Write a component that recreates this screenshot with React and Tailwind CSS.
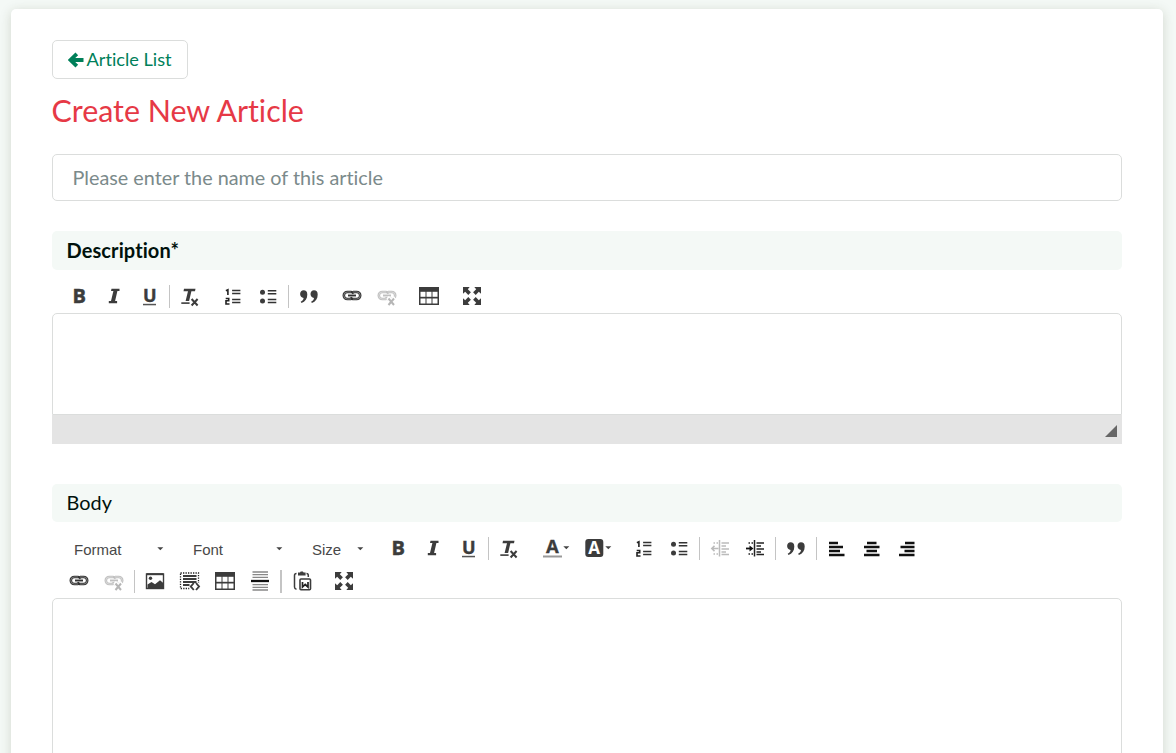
const K = '#3c3c3c';
const SANS = "'Open Sans', sans-serif";

const Svg = ({ children, dim }) => (
  <svg width="20" height="20" viewBox="0 0 20 20" className={dim ? 'shrink-0 overflow-visible opacity-30' : 'shrink-0 overflow-visible'}>{children}</svg>
);

const Bold = () => <Svg><text x="3.4" y="17.2" fontFamily={SANS} fontWeight="700" fontSize="20" fill={K} stroke={K} strokeWidth=".5">B</text></Svg>;
const Italic = () => (
  <Svg><path d="M7.500 2.800h8v2.200h-2.100l-2.300 10h2V17.200H4.800V15h2.200l2.400-10H7z" fill={K} /></Svg>
);
const Underline = () => (
  <Svg>
    <text x="4" y="15.800" fontFamily={SANS} fontWeight="700" fontSize="18" fill={K} stroke={K} strokeWidth=".4">U</text>
    <rect x="4" y="17.800" width="13" height="1.500" fill="#555" />
  </Svg>
);
const RemoveFormat = () => (
  <Svg>
    <path d="M5 2.800h11.500l-.5 2.500h-3.600L10.100 15H6.600L9 5.300H4.500z" fill={K} />
    <rect x="2.300" y="16.300" width="8.300" height="1.600" fill={K} />
    <path d="M12.600 13l6 6.500m0-6.500l-6 6.500" stroke={K} strokeWidth="2" />
  </Svg>
);
const NumList = () => (
  <Svg>
    <g transform="translate(1.9 0)">
      <path d="M2 4.800l2-1V9M1.800 12.500h3v2.300h-2.700v3.200h3.500" fill="none" stroke="#222" strokeWidth="1.600" />
      <path d="M8.200 4.500h8.300M8.200 7.500h8.300M8.200 13.500h8.300M8.200 16.500h8.300" stroke="#333" strokeWidth="1.400" />
    </g>
  </Svg>
);
const BulletList = () => (
  <Svg>
    <circle cx="5.500" cy="6.200" r="2.500" fill={K} />
    <circle cx="5.500" cy="15" r="2.500" fill={K} />
    <path d="M10.800 4.700h8.500M10.800 7.700h8.500M10.800 13.500h8.500M10.800 16.500h8.500" stroke="#333" strokeWidth="1.500" />
  </Svg>
);
const Quote = () => (
  <Svg>
    {[1.100, 11.500].map((x) => (
      <path key={x} transform={`translate(${x} .5)`} d="M4.500 3.800c2.300 0 3.700 1.500 3.700 4.100 0 4.200-2 7.200-5.800 8.600l-.8-1.200c1.800-1 2.700-2.300 2.900-3.900C2.500 11.400 1 10 1 7.600c0-2.300 1.500-3.800 3.500-3.800z" fill={K} />
    ))}
  </Svg>
);
const chain = (
  <g fill="none">
    <g stroke="#333" strokeWidth="2.600">
      <path d="M9 13H5.300a3.500 3.500 0 010-7H9c1.200 0 2.200.6 2.700 1.500" />
      <path d="M11 6h3.700a3.500 3.500 0 010 7H11c-1.200 0-2.200-.6-2.700-1.500" />
    </g>
    <g stroke="#999" strokeWidth=".7">
      <path d="M9 13H5.300a3.500 3.500 0 010-7H9" />
      <path d="M11 6h3.700a3.500 3.500 0 010 7H11" />
    </g>
    <path d="M6 9.500h8" stroke="#333" strokeWidth="1.900" />
  </g>
);
const Link = () => <Svg>{chain}</Svg>;
const Unlink = () => (
  <Svg dim>
    {chain}
    <path d="M10.500 11.500l7.500 7m0-7l-7.500 7" stroke="#fff" strokeWidth="4" />
    <path d="M11.500 12.500l5.500 6.500m0-6.500l-5.500 6.500" stroke="#111" strokeWidth="2" />
  </Svg>
);
const Table = () => (
  <Svg>
    <rect y="1" width="20" height="18" fill={K} />
    <g fill="#fff">
      {[5.800, 12.500].map((y) => [1.500, 7.500, 13.500].map((x) => <rect key={x + '-' + y} x={x} y={y} width="5" height="5" />))}
    </g>
  </Svg>
);
const Maximize = () => (
  <Svg>
    {[0, 90, 180, 270].map((r) => (
      <path key={r} transform={`rotate(${r} 10 10)`} d="M1 1h6.700L5.800 3.200l3.100 3.100-2.600 2.600-3.100-3.100L1 7.700z" fill={K} />
    ))}
  </Svg>
);
const Caret = () => <svg width="7" height="4" viewBox="0 0 7 4" className="shrink-0"><path d="M.3.3h6l-3 3z" fill="#444" /></svg>;
const TextColor = () => (
  <Svg>
    <text x="3" y="15" fontFamily={SANS} fontWeight="700" fontSize="18.5" fill={K} stroke={K} strokeWidth=".3">A</text>
    <rect x="0" y="17.500" width="19" height="2" fill="#999" />
  </Svg>
);
const BgColor = () => (
  <Svg>
    <rect x=".3" y="1" width="18" height="18" rx="3" fill={K} />
    <text x="3.200" y="15.800" fontFamily={SANS} fontWeight="700" fontSize="17" fill="#fff">A</text>
  </Svg>
);
const indentLines = (
  <>
    <path d="M10 1.500v16.500" stroke="#222" strokeWidth="1.500" />
    <path d="M12 4.500h7.500M12 7.500h4.500M12 10.500h7.500M12 13.500h4.500M12 16h7.500" stroke="#222" strokeWidth="1.300" />
    <path d="M4 4.500h1.500M7 4.500h1.500M4 15.500h1.500M7 15.500h1.500" stroke="#222" strokeWidth="1.300" />
  </>
);
const Outdent = () => <Svg dim><g transform="translate(.5 .5)">{indentLines}<path d="M9 10H2m3-2.600L2.300 10 5 12.600" fill="none" stroke="#222" strokeWidth="1.500" /></g></Svg>;
const Indent = () => <Svg><g transform="translate(.5 .5)">{indentLines}<path d="M1.500 10H6" stroke="#111" strokeWidth="1.800" /><path d="M5 7l4 3-4 3z" fill="#111" /></g></Svg>;
const AlignLeft = () => <Svg><path d="M3 5h9M3 9h14M3 13h11M3 17h15.500" stroke="#111" strokeWidth="2.300" /></Svg>;
const AlignCenter = () => <Svg><path d="M6 5h9.500M3 9h15.500M5.500 13h10.500M3 17h15.500" stroke="#111" strokeWidth="2.300" /></Svg>;
const AlignRight = () => <Svg><path d="M9 5h9.500M4.500 9h14M8.500 13h10M3 17h15.500" stroke="#111" strokeWidth="2.300" /></Svg>;
const Image = () => (
  <Svg>
    <rect x="2.500" y="3" width="17" height="14.500" fill="#fff" stroke={K} strokeWidth="1.400" />
    <path d="M2.500 3.200h17" stroke={K} strokeWidth="2" />
    <circle cx="6.500" cy="7.200" r="1.700" fill={K} />
    <path d="M3.500 17v-3.500l4-2.500 3.500 2.300 5-4 3 2.500V17z" fill={K} />
  </Svg>
);
const DivContainer = () => (
  <Svg>
    <rect x="1.500" y="2" width="18" height="15.500" fill="none" stroke="#222" strokeWidth="1.300" strokeDasharray="1.300 1.200" />
    <path d="M4 5h13.500M4 8h13.500M4 11h13.500M4 14h7" stroke={K} strokeWidth="1.900" />
    <path d="M10.500 12h10v8h-10z" fill="#fff" />
    <path d="M14.800 12l-3 3.500 3 3.500M17 12l3 3.500-3 3.500" fill="none" stroke={K} strokeWidth="1.900" />
  </Svg>
);
const PageBreak = () => (
  <Svg>
    <path d="M3.500 1h15.500M3.500 3.700h15.500M3.500 6.300h15.500M3.500 13.700h15.500M3.500 16.300h15.500M3.500 19h15.500" stroke="#888" strokeWidth="1.300" />
    <path d="M2 10H20" stroke="#111" strokeWidth="2.300" />
  </Svg>
);
const Paste = () => (
  <Svg>
    <path d="M4.500 2.500C3 2.500 2.500 3.300 2.500 4.500V16c0 1.300.7 2 2 2.200M14.500 2.500c1.300 0 1.800.8 1.800 2V6" fill="none" stroke={K} strokeWidth="1.500" />
    <path d="M6 1.500h2L8.700.5h2.200l.7 1h2V4.500H6z" fill={K} />
    <rect x="8" y="8" width="10.500" height="10.800" rx="1" fill="#fff" stroke={K} strokeWidth="1.600" />
    <path d="M10.500 11v5l2.700-2.500L16 16v-5" fill="none" stroke="#222" strokeWidth="1.700" />
  </Svg>
);

const Btn = ({ icon: Icon, className = '' }) => (
  <button className={`-mt-0.5 flex h-8 w-[35px] shrink-0 items-center pl-[7px] ${className}`}><Icon /></button>
);
const ColorBtn = ({ icon: Icon, className = '' }) => (
  <button className={`-mt-0.5 flex h-8 w-[42px] shrink-0 items-center pl-[7px] ${className}`}><Icon /><Caret /></button>
);
const Sep = ({ className = 'ml-0.5 mr-0.5 w-px' }) => <span className={`h-[23px] shrink-0 bg-[#c4c4c4] ${className}`} />;
const Combo = ({ label, className }) => (
  <button className={`flex h-8 shrink-0 items-center justify-between text-[15px] text-[#484848] ${className}`} style={{ fontFamily: "'Liberation Sans', Arial, sans-serif" }}>
    <span className="pt-[3px]">{label}</span><Caret />
  </button>
);

export default function App() {
  return (
    <div className="h-[753px] overflow-hidden bg-[#f4f9f6] pl-[11px] pr-[13px] pt-[9px] text-[#00120c] [font-variant-ligatures:none]" style={{ fontFamily: 'Lato, sans-serif' }}>
      <main className="flex h-[860px] flex-col items-stretch rounded-[5px] bg-white px-[41px] pt-[31px] shadow-[0_2px_12px_rgba(60,60,30,0.18)]">
        <button className="flex h-[39px] w-[136px] shrink-0 items-center rounded-[5px] border border-[#dbdddc] pl-[14.500px] text-[18.200px] text-[#00805a]">
          <svg width="16" height="16" viewBox="0 0 16 16" className="mr-[3px] mt-px shrink-0">
            <path d="M8.800 1.800L2.500 8l6.300 6.200M3 8h12.500" fill="none" stroke="#00805a" strokeWidth="3.800" />
          </svg>
          <span className="whitespace-nowrap">Article List</span>
        </button>
        <h1 className="-ml-[0.500px] mt-[12px] h-[39px] shrink-0 text-[30.400px] leading-[38px] text-[#e63946]">Create New Article</h1>
        <input placeholder="Please enter the name of this article" className="mt-[24px] h-[47px] shrink-0 rounded-[5px] border border-[#dbdddc] px-[19.500px] pb-0.5 text-[19.800px] outline-none placeholder:text-[#7b8a8b] placeholder:opacity-100" />
        <h2 className="mt-[30px] h-[39px] shrink-0 rounded-[5px] bg-[#f4f9f6] pl-[14.500px] text-[20px] font-bold leading-[39px] tracking-[0.005em]">Description*</h2>
        <div className="mt-[10px] flex h-[33px] shrink-0 items-center pl-[10px]">
          <Btn icon={Bold} /><Btn icon={Italic} /><Btn icon={Underline} />
          <Sep />
          <Btn icon={RemoveFormat} /><Btn icon={NumList} className="ml-2" /><Btn icon={BulletList} />
          <Sep className="ml-[3px] mr-0.5 w-px" />
          <Btn icon={Quote} /><Btn icon={Link} className="ml-[9px]" /><Btn icon={Unlink} />
          <Btn icon={Table} className="ml-[7px]" /><Btn icon={Maximize} className="ml-2" />
        </div>
        <div className="h-[102px] shrink-0 rounded-t-[5px] border border-[#dbdddc]" />
        <div className="flex h-[29px] shrink-0 items-end justify-end bg-[#e4e4e4] pb-[7px] pr-[5px]">
          <svg width="12" height="12" viewBox="0 0 12 12"><path d="M12 0v12H0z" fill="#666" /></svg>
        </div>
        <h2 className="mt-[40px] h-[38px] shrink-0 rounded-[5px] bg-[#f4f9f6] pl-[14.500px] text-[19.900px] leading-[36px]">Body</h2>
        <div className="mt-[10px] flex h-[33px] shrink-0 items-center pl-[22px]">
          <Combo label="Format" className="w-[90px]" />
          <Combo label="Font" className="ml-[29px] w-[90px]" />
          <Combo label="Size" className="ml-[29px] w-[52px]" />
          <Btn icon={Bold} className="ml-[17px]" /><Btn icon={Italic} /><Btn icon={Underline} />
          <Sep />
          <Btn icon={RemoveFormat} />
          <ColorBtn icon={TextColor} className="ml-[10px]" /><ColorBtn icon={BgColor} />
          <Btn icon={NumList} className="ml-1.5" /><Btn icon={BulletList} />
          <Sep className="ml-[3px] mr-0.5 w-px" />
          <Btn icon={Outdent} /><Btn icon={Indent} />
          <Sep className="ml-[3px] mr-0.5 w-px" />
          <Btn icon={Quote} />
          <Sep className="ml-[3px] mr-0.5 w-px" />
          <Btn icon={AlignLeft} /><Btn icon={AlignCenter} /><Btn icon={AlignRight} />
        </div>
        <div className="flex h-[33px] shrink-0 items-center pl-[10px]">
          <Btn icon={Link} /><Btn icon={Unlink} />
          <Sep />
          <Btn icon={Image} /><Btn icon={DivContainer} /><Btn icon={Table} className="ml-px" /><Btn icon={PageBreak} className="-ml-px" />
          <Sep className="ml-[3px] mr-[3px] w-0.5" />
          <Btn icon={Paste} /><Btn icon={Maximize} className="ml-[7px]" />
        </div>
        <div className="h-[240px] shrink-0 rounded-t-[5px] border border-[#dbdddc]" />
      </main>
    </div>
  );
}
